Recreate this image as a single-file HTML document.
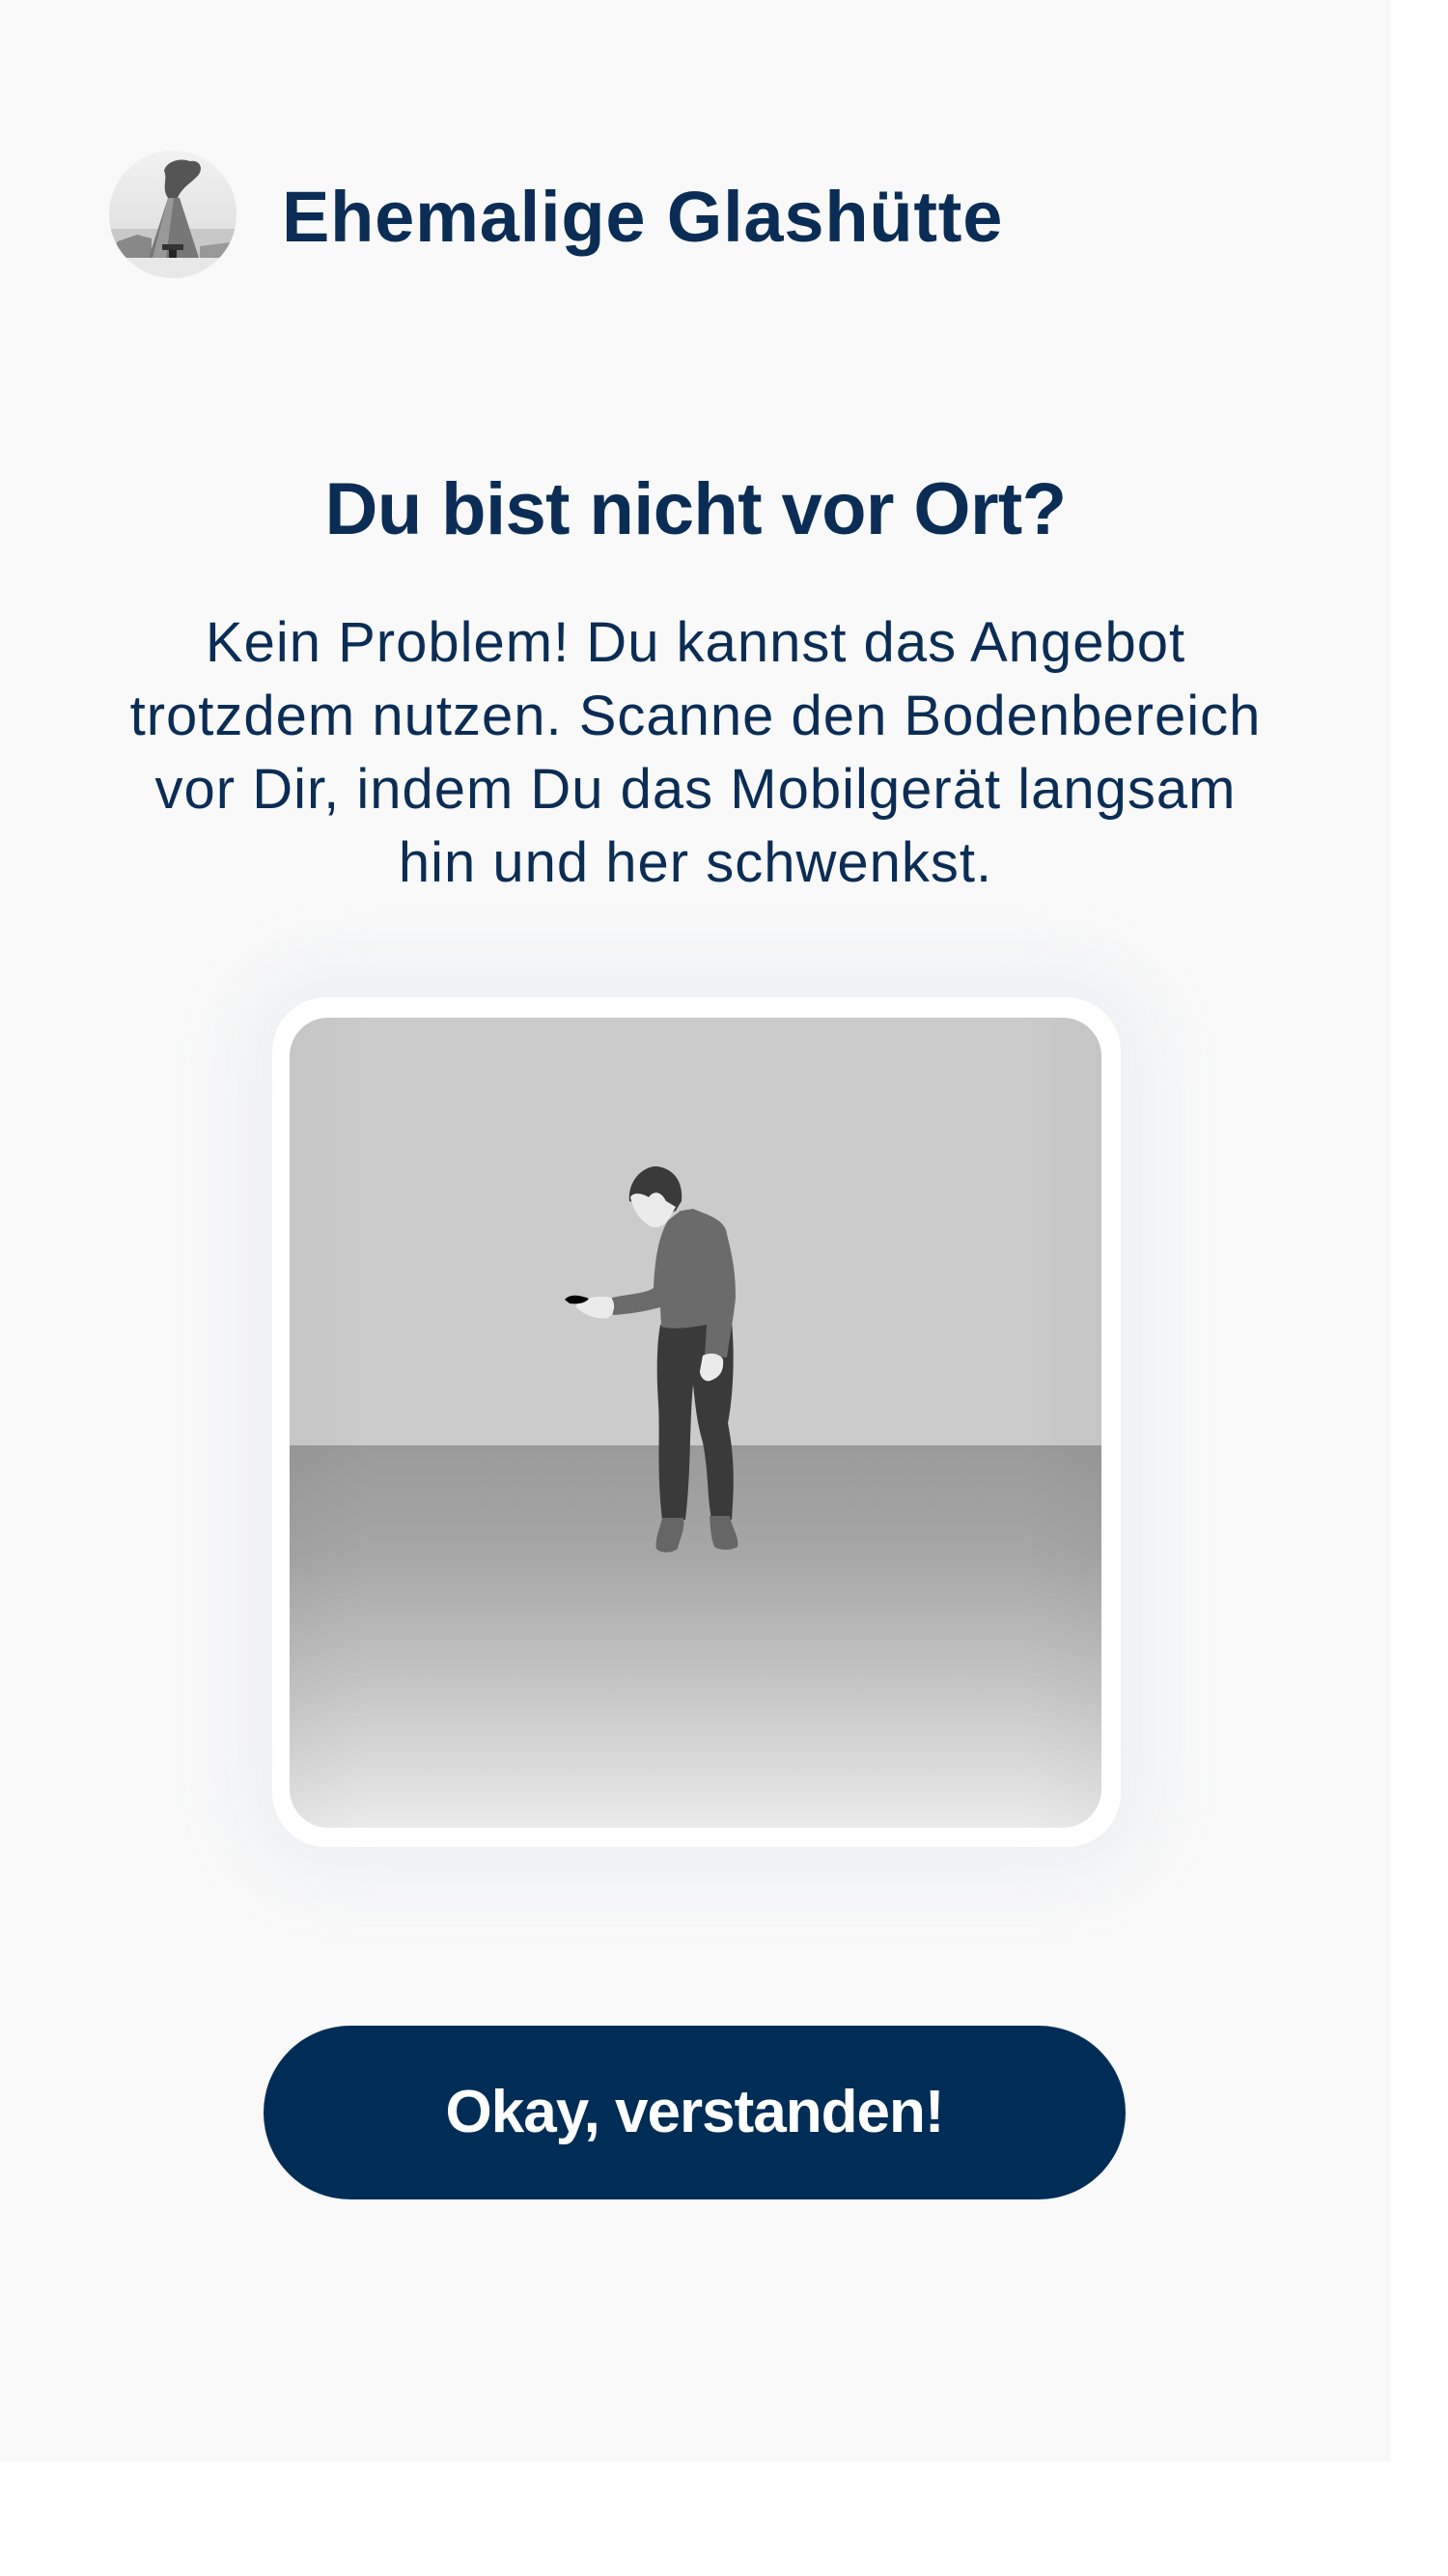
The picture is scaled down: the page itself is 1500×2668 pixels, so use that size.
<!DOCTYPE html>
<html><head><meta charset="utf-8">
<style>
html,body{margin:0;padding:0;background:#fff;}
body{width:1500px;height:2668px;position:relative;overflow:hidden;font-family:"Liberation Sans",sans-serif;color:#0b2d55;}
#bg{position:absolute;left:0;top:0;width:1441px;height:2549px;background:#f9f9f9;}
.abs{position:absolute;}
#title{left:292px;top:180px;font-size:74px;font-weight:bold;letter-spacing:0.8px;white-space:nowrap;line-height:90px;color:#0b2d55;}
#h{left:0;width:1441px;text-align:center;top:478px;font-size:76px;font-weight:bold;letter-spacing:-0.6px;line-height:100px;white-space:nowrap;color:#0b2d55;}
#p{left:0;width:1441px;text-align:center;top:628px;font-size:58px;line-height:76px;letter-spacing:1px;color:#0b2d55;white-space:nowrap;}
#card{left:282px;top:1033px;width:879px;height:880px;background:#fff;border-radius:56px;box-shadow:0 0 70px 30px rgba(225,228,238,0.45);}
#img{left:300px;top:1054px;width:841px;height:839px;border-radius:40px;overflow:hidden;
 background:linear-gradient(#cbcbcb 0,#cbcbcb 443px,#9a9a9a 443px,#a7a7a7 560px,#c7c7c7 700px,#ebebeb 839px);}
#btn{left:273px;top:2098px;width:893px;height:180px;border-radius:90px;background:#002d56;color:#fff;text-align:center;line-height:180px;font-size:62px;font-weight:bold;letter-spacing:-1px;}
</style></head><body>
<div id="bg"></div>
<svg class="abs" style="left:112px;top:155px" width="134" height="134" viewBox="0 0 134 134">
<defs><clipPath id="c"><circle cx="67" cy="67" r="66"/></clipPath>
<linearGradient id="sk" x1="0" y1="0" x2="0" y2="1"><stop offset="0" stop-color="#f2f2f2"/><stop offset="1" stop-color="#d8d8d8"/></linearGradient></defs>
<g clip-path="url(#c)">
<rect width="134" height="134" fill="url(#sk)"/>
<rect x="0" y="82" width="134" height="30" fill="#c8c8c8"/>
<path d="M10 95 L30 88 L45 92 L45 112 L0 112Z" fill="#888"/>
<path d="M95 100 L134 95 L134 112 L95 112Z" fill="#999"/>
<path d="M62 50 C55 40 62 30 58 22 C60 12 75 8 85 12 C95 10 100 20 92 28 C85 35 76 40 72 50Z" fill="#555"/>
<path d="M62 50 L74 50 L94 112 L42 112Z" fill="#777"/>
<path d="M62 50 L68 50 L60 112 L46 112Z" fill="#999"/>
<rect x="63" y="102" width="8" height="20" fill="#222"/>
<rect x="56" y="98" width="22" height="6" fill="#333"/>
<rect x="0" y="112" width="134" height="22" fill="#e8e8e8"/>
</g></svg>
<div id="title" class="abs">Ehemalige Glashütte</div>
<div id="h" class="abs">Du bist nicht vor Ort?</div>
<div id="p" class="abs">Kein Problem! Du kannst das Angebot<br>trotzdem nutzen. Scanne den Bodenbereich<br>vor Dir, indem Du das Mobilgerät langsam<br>hin und her schwenkst.</div>
<div id="card" class="abs"></div>
<div id="img" class="abs">
<svg width="841" height="839" viewBox="0 0 841 839" style="position:absolute;left:0;top:0">
<defs>
<linearGradient id="vg" x1="0" x2="1"><stop offset="0" stop-color="#000" stop-opacity="0.03"/><stop offset="0.1" stop-color="#000" stop-opacity="0"/><stop offset="0.9" stop-color="#000" stop-opacity="0"/><stop offset="1" stop-color="#000" stop-opacity="0.03"/></linearGradient></defs>
<rect width="841" height="839" fill="url(#vg)"/>
<path d="M384 318 L458 314 C462 360 458 400 454 420 C462 460 460 490 458 520 L437 520 C432 490 434 470 428 440 C422 420 420 400 418 380 C414 420 416 470 410 520 L386 520 C380 470 384 430 382 400 C380 370 380 340 384 318Z" fill="#3a3a3a"/>
<path d="M386 518 L408 518 C410 530 404 540 402 550 C396 555 384 555 380 550 C378 540 384 528 386 518Z" fill="#666"/>
<path d="M435 516 L456 516 C458 528 466 538 464 548 C458 552 446 552 440 548 C436 538 436 526 435 516Z" fill="#666"/>
<path d="M392 210 L405 200 L418 198 C430 203 448 208 452 220 C458 245 462 260 462 290 C460 310 456 330 453 352 L430 350 L432 318 C410 322 395 323 385 320 L384 300 C365 305 350 307 335 308 L334 290 C352 286 368 286 377 280 C378 260 380 230 392 210Z" fill="#6b6b6b"/>
<path d="M352 190 C350 170 365 154 380 154 C398 156 408 170 406 190 L400 200 C392 204 380 204 370 196 Z" fill="#3a3a3a"/>
<path d="M353 186 C356 180 366 182 372 186 C376 180 384 178 390 190 L400 196 L392 210 C386 218 375 220 368 212 C360 206 356 198 353 186Z" fill="#ebebeb"/>
<path d="M297 297 C305 290 320 287 333 290 C338 296 337 306 330 311 C318 313 305 308 297 300Z" fill="#ebebeb"/>
<path d="M285 292 C290 286 300 287 310 291 C306 296 298 297 290 296 Z" fill="#000"/>
<path d="M428 350 C436 346 446 348 449 354 C450 366 446 372 436 376 C430 378 425 372 425 366Z" fill="#ebebeb"/>
</svg>
</div>
<div id="btn" class="abs">Okay, verstanden!</div>
</body></html>
